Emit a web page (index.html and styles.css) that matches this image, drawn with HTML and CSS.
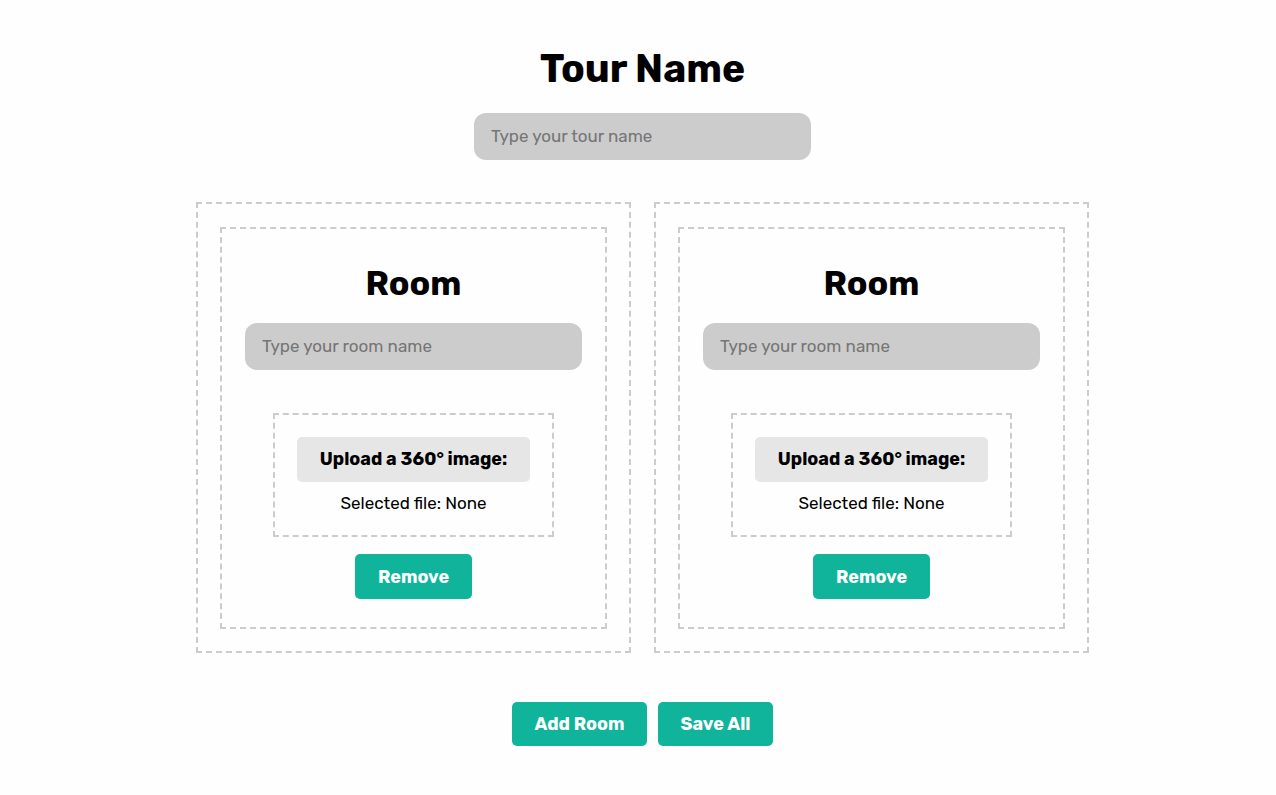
FILE: index.html
```html
<!DOCTYPE html>
<html lang="en">
<head>
<meta charset="utf-8">
<meta name="viewport" content="width=device-width, initial-scale=1">
<title>Tour Name</title>
<link rel="stylesheet" href="styles.css">
</head>
<body>
<main class="page">
  <section class="tour">
    <h1 class="tour-title"><label for="tour-name">Tour Name</label></h1>
    <input class="field" id="tour-name" type="text" placeholder="Type your tour name">
  </section>
  <div class="rooms">
    <section class="room">
      <div class="room-body">
        <h2 class="room-title"><label for="room-1">Room</label></h2>
        <input class="field" id="room-1" type="text" placeholder="Type your room name">
        <div class="upload">
          <label class="upload-label" for="file-1">Upload a 360° image:</label>
          <input class="upload-input" id="file-1" type="file" accept="image/*">
          <p class="upload-status">Selected file: None</p>
        </div>
        <button class="button remove" type="button">Remove</button>
      </div>
    </section>
    <section class="room">
      <div class="room-body">
        <h2 class="room-title"><label for="room-2">Room</label></h2>
        <input class="field" id="room-2" type="text" placeholder="Type your room name">
        <div class="upload">
          <label class="upload-label" for="file-2">Upload a 360° image:</label>
          <input class="upload-input" id="file-2" type="file" accept="image/*">
          <p class="upload-status">Selected file: None</p>
        </div>
        <button class="button remove" type="button">Remove</button>
      </div>
    </section>
  </div>
  <div class="actions">
    <button class="button add" type="button">Add Room</button>
    <button class="button save" type="button">Save All</button>
  </div>
</main>
</body>
</html>
```

FILE: styles.css
```css
* { box-sizing: border-box; }

body {
  margin: 0;
  background: #fefefe;
  color: #000;
  font-family: Rubik, Roboto, sans-serif;
  font-size: 17px;
  line-height: 20px;
}

h1, h2, p { margin: 0; }

.page {
  display: flex;
  flex-direction: column;
  align-items: center;
  padding: 45px 0 48px 9px;
}

.tour {
  display: flex;
  flex-direction: column;
  align-items: center;
}

.tour-title {
  margin-bottom: 20px;
  font-size: 39px;
  font-weight: 700;
  line-height: 48px;
}

.field {
  width: 337px;
  max-width: 100%;
  height: 47px;
  padding: 0 17px 2px;
  border: 0;
  border-radius: 12px;
  background: #ccc;
  color: #000;
  font: inherit;
}

.field::placeholder { color: #757575; }

.rooms {
  display: flex;
  flex-wrap: wrap;
  justify-content: center;
  gap: 23px;
  margin: 42px 0 49px;
}

.room {
  padding: 23px 22px 22px;
  border: 2px dashed #ccc;
}

.room-body {
  display: flex;
  flex-direction: column;
  align-items: center;
  padding: 35px 23px 28px;
  border: 2px dashed #ccc;
}

.room-title {
  margin-bottom: 19px;
  font-size: 34px;
  font-weight: 700;
  line-height: 40px;
}

.upload {
  display: flex;
  flex-direction: column;
  align-items: center;
  margin: 43px 0 17px;
  padding: 22px;
  border: 2px dashed #ccc;
}

.upload-label {
  display: flex;
  align-items: center;
  justify-content: center;
  min-width: 233px;
  height: 45px;
  padding-bottom: 2px;
  border-radius: 5px;
  background: #e6e6e6;
  font-size: 18px;
  font-weight: 700;
  cursor: pointer;
}

.upload-input {
  position: absolute;
  width: 1px;
  height: 1px;
  opacity: 0;
}

.upload-status {
  margin: 11px 0 0;
}

.button {
  height: 45px;
  padding: 0 16px;
  border: 0;
  border-radius: 5px;
  background: #0fb49a;
  color: #fff;
  font: inherit;
  font-size: 18px;
  font-weight: 700;
  cursor: pointer;
}

.remove { min-width: 117px; }
.add { min-width: 135px; }
.save { min-width: 115px; }

.actions {
  display: flex;
  gap: 11px;
}

.actions .button { height: 44px; }
```
